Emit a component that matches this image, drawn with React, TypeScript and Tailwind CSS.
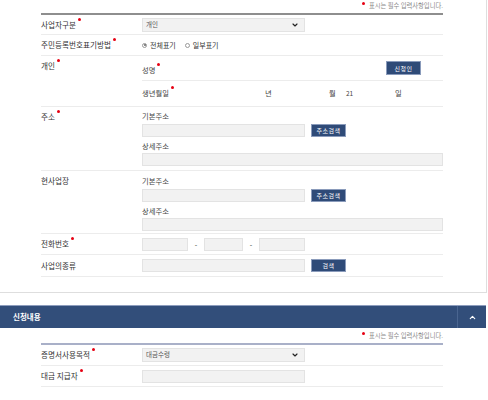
import { ChevronDown, ChevronUp } from 'lucide-react';

const font = { fontFamily: '"Noto Sans CJK KR", "Noto Sans", sans-serif' };

const Req = () => (
  <span className="inline-block w-[3px] h-[3px] rounded-full bg-[#e60012] ml-[2px] align-top relative -top-[2px]" />
);

const Field = ({ w }: { w: string }) => (
  <div className={`h-[13px] ${w} bg-[#f2f2f2] border border-[#e3e3e3]`} />
);

const Btn = ({ children, w = 'w-[35px]', h = 'h-[13px]' }: { children: React.ReactNode; w?: string; h?: string }) => (
  <div className={`${w} ${h} bg-[#2f4b78] border border-[#8a9bbb] text-white text-[6px] flex items-center justify-center tracking-[0.5px]`}>
    {children}
  </div>
);

const Select = ({ value }: { value: string }) => (
  <div className="h-[14px] w-[163px] bg-[#f2f2f2] border border-[#e3e3e3] flex items-center justify-between pl-[3px] pr-[5px] text-[6.5px] text-[#555]">
    <span>{value}</span>
    <ChevronDown size={8} strokeWidth={3.5} className="text-[#222]" />
  </div>
);

const Row = ({ label, req, h, top, children }: { label: string; req?: boolean; h: string; top?: boolean; children: React.ReactNode }) => (
  <div className={`flex ${h} border-b border-[#ececec] ${top ? 'items-start' : 'items-center'}`}>
    <div className={`w-[101px] shrink-0 text-[7.6px] text-[#333] leading-[10px] ${top ? 'pt-[5px]' : ''}`}>
      {label}
      {req && <Req />}
    </div>
    <div className="flex-1 h-full">{children}</div>
  </div>
);

const SubLabel = ({ children, req }: { children: React.ReactNode; req?: boolean }) => (
  <span className="text-[7.3px] text-[#444] leading-[10px]">
    {children}
    {req && <Req />}
  </span>
);

const Address = () => (
  <div className="flex flex-col pt-[4px] text-[7.3px] leading-[10px]">
    <div className="h-[10px]">
      <SubLabel>기본주소</SubLabel>
    </div>
    <div className="flex items-center gap-[6px] mt-[3px]">
      <Field w="w-[163px]" />
      <Btn>주소검색</Btn>
    </div>
    <div className="h-[10px] mt-[4px]">
      <SubLabel>상세주소</SubLabel>
    </div>
    <div className="mt-[2px]">
      <Field w="w-[301px]" />
    </div>
  </div>
);

export default function App() {
  return (
    <div className="w-[488px] h-[400px] bg-white overflow-hidden" style={font}>
      <div className="w-[487px] border-r border-b border-[#dedede] pb-[15px]">
        <div className="ml-[41px] w-[402px]">
          <div className="h-[13px] flex items-center justify-end text-[6.3px] text-[#8a8a8a] pb-[2px]">
            <span className="inline-block w-[3px] h-[3px] rounded-full bg-[#e60012] mr-[4px] relative -top-[2px]" />
            표시는 필수 입력사항입니다.
          </div>
          <div className="border-t-2 border-[#8e8e8e]" />

          <Row label="사업자구분" req h="h-[20px]">
            <div className="h-full flex items-center">
              <Select value="개인" />
            </div>
          </Row>

          <Row label="주민등록번호표기방법" req h="h-[21px]">
            <div className="h-full flex items-center text-[7px] text-[#333]">
              <span className="w-[5px] h-[5px] rounded-full border border-[#999] flex items-center justify-center mr-[3px]">
                <span className="w-[2px] h-[2px] rounded-full bg-[#666]" />
              </span>
              <span className="mr-[9px]">전체표기</span>
              <span className="w-[5px] h-[5px] rounded-full border border-[#999] mr-[3px]" />
              <span>일부표기</span>
            </div>
          </Row>

          <Row label="개인" req h="h-[51px]" top>
            <div className="flex flex-col h-full">
              <div className="h-[25px] flex items-center justify-between pr-[22px] border-b border-[#ececec] pt-[3px]">
                <SubLabel req>성명</SubLabel>
                <div className="-mt-[3px]">
                  <Btn h="h-[14px]">신청인</Btn>
                </div>
              </div>
              <div className="flex-1 flex items-center text-[7.3px] text-[#444]">
                <span className="w-[123px]">
                  <SubLabel req>생년월일</SubLabel>
                </span>
                <span className="w-[64px]">년</span>
                <span className="w-[17px]">월</span>
                <span className="w-[49px] text-[6.5px]">21</span>
                <span>일</span>
              </div>
            </div>
          </Row>

          <Row label="주소" req h="h-[64px]" top>
            <Address />
          </Row>

          <Row label="현사업장" h="h-[63px]" top>
            <div className="pt-[1px]">
              <Address />
            </div>
          </Row>

          <Row label="전화번호" req h="h-[21px]">
            <div className="h-full flex items-center text-[7px] text-[#333]">
              <Field w="w-[46px]" />
              <span className="w-[16px] text-center">-</span>
              <Field w="w-[39px]" />
              <span className="w-[16px] text-center">-</span>
              <Field w="w-[46px]" />
            </div>
          </Row>

          <Row label="사업의종류" h="h-[22px]">
            <div className="h-full flex items-center gap-[6px]">
              <Field w="w-[163px]" />
              <Btn>검색</Btn>
            </div>
          </Row>
        </div>
      </div>

      <div className="mt-[12px] w-[486px] h-[23px] bg-[#324e7a] border-t border-[#8d9dbd] flex items-center">
        <span className="flex-1 pl-[13px] text-white text-[7.5px] font-bold">신청내용</span>
        <div className="w-[29px] h-full border-l border-[#4a6590] flex items-center justify-center">
          <ChevronUp size={9} strokeWidth={3} className="text-white" />
        </div>
      </div>

      <div className="ml-[41px] w-[402px]">
        <div className="h-[15px] flex items-center justify-end text-[6.3px] text-[#8a8a8a]">
          <span className="inline-block w-[3px] h-[3px] rounded-full bg-[#e60012] mr-[4px] relative -top-[2px]" />
          표시는 필수 입력사항입니다.
        </div>
        <div className="border-t-2 border-[#a9b0c8]" />

        <Row label="증명서사용목적" req h="h-[21px]">
          <div className="h-full flex items-center">
            <Select value="대금수령" />
          </div>
        </Row>

        <Row label="대금 지급자" req h="h-[21px]">
          <div className="h-full flex items-center">
            <Field w="w-[163px]" />
          </div>
        </Row>
      </div>
    </div>
  );
}
